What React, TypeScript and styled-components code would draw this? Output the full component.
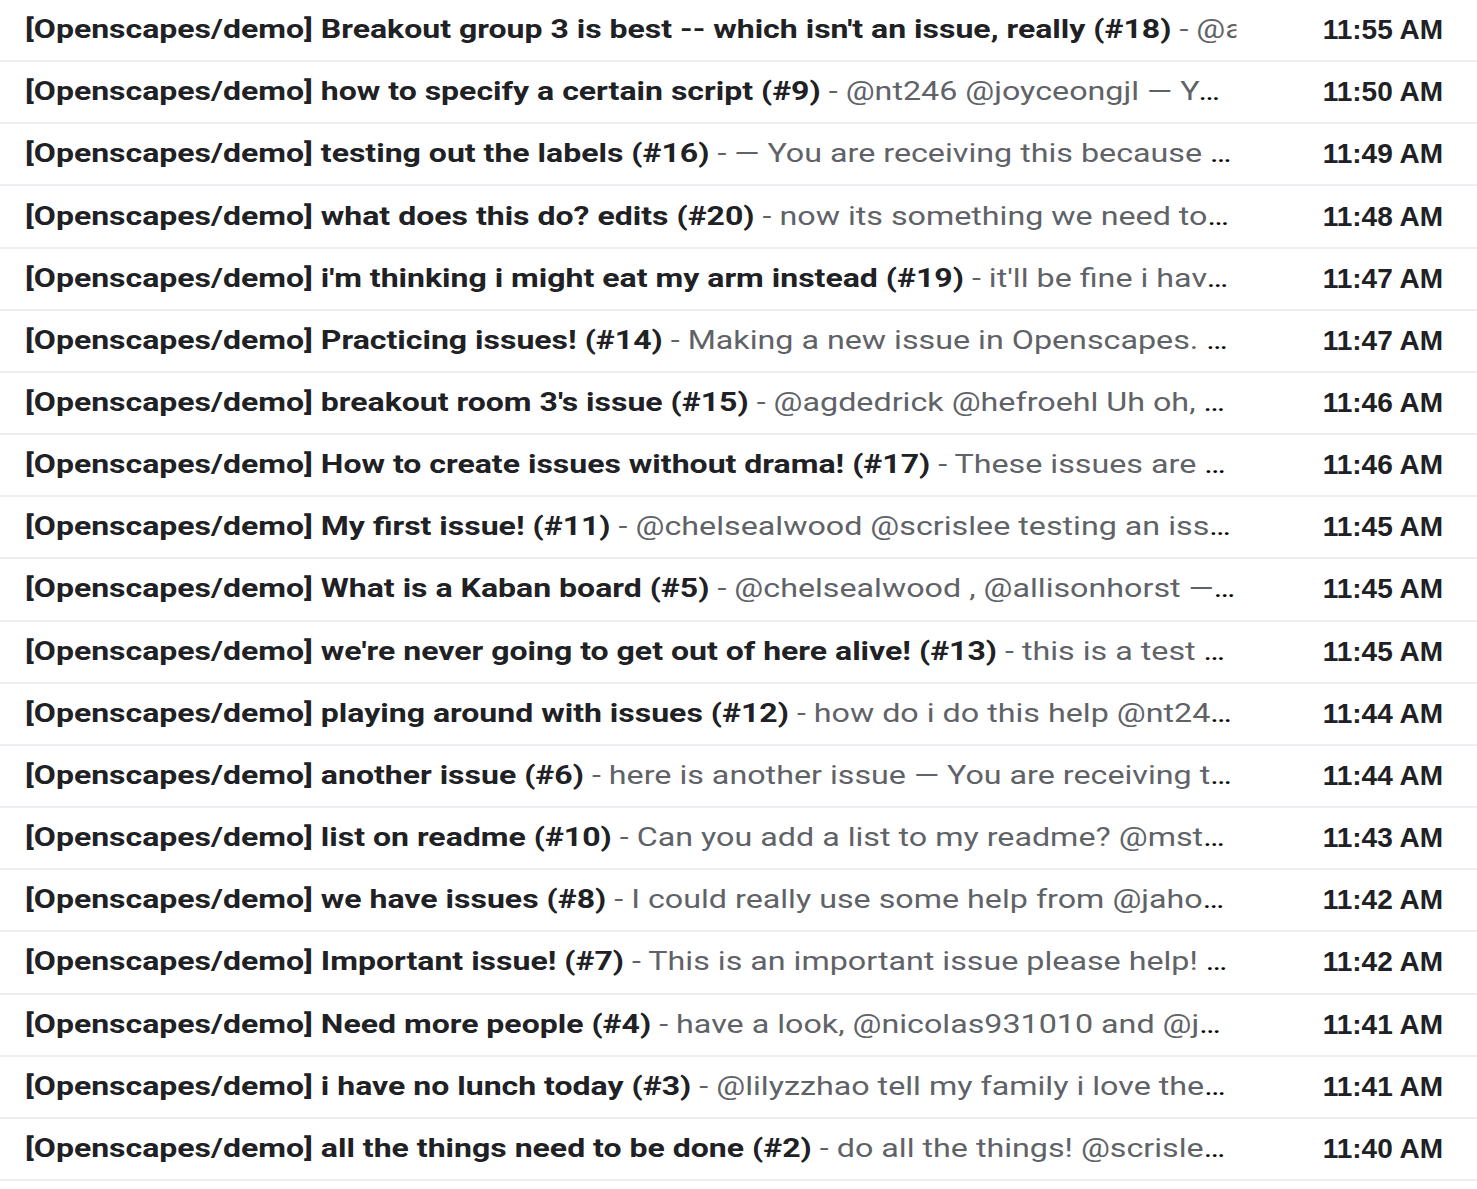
import React from "react";
import styled, { createGlobalStyle } from "styled-components";

// the reference text is stretched horizontally; the subject/snippet line is
// laid out narrow and widened by STRETCH so that ellipsis still works
const STRETCH = 1.28;

const GlobalStyle = createGlobalStyle`
  html, body {
    margin: 0;
    padding: 0;
    background: #ffffff;
    overflow: hidden;
  }
  body {
    font-family: Roboto, "Liberation Sans", Arial, sans-serif;
    -webkit-font-smoothing: antialiased;
  }
`;

const List = styled.div`
  display: flex;
  flex-direction: column;
`;

const Row = styled.div`
  height: 62.17px;
  box-sizing: border-box;
  display: flex;
  align-items: center;
  border-bottom: 2px solid #eceef1;
`;

const Content = styled.div`
  flex: 1;
  min-width: 0;
`;

const Line = styled.div<{ $clip?: boolean }>`
  width: calc(100% / ${STRETCH});
  box-sizing: border-box;
  padding-left: 19.5px;
  transform: scaleX(${STRETCH});
  transform-origin: 0 50%;
  overflow: hidden;
  white-space: nowrap;
  text-overflow: ${(p) => (p.$clip ? "clip" : "ellipsis")};
  font-size: 25px;
  line-height: 32px;
`;

const Subject = styled.span`
  font-weight: 700;
  color: #202124;
`;

const Snippet = styled.span`
  font-size: 25.2px;
  font-weight: 400;
  color: #5f6368;
`;

const Time = styled.div`
  flex: 0 0 241px;
  box-sizing: border-box;
  padding-right: 34px;
  text-align: right;
  font-family: "Liberation Sans", Arial, sans-serif;
  font-size: 28px;
  font-weight: 700;
  color: #202124;
  white-space: nowrap;
`;

type Mail = {
  subject: string;
  snippet: string;
  time: string;
  clip?: boolean;
};

const mails: Mail[] = [
  {
    subject: "Breakout group 3 is best -- which isn't an issue, really (#18)",
    snippet: "@allisonhorst @jules32 — You are receiving this because you were mentioned.",
    time: "11:55 AM",
    clip: true,
  },
  {
    subject: "how to specify a certain script (#9)",
    snippet: "@nt246 @joyceongjl — You are receiving this because you were mentioned.",
    time: "11:50 AM",
  },
  {
    subject: "testing out the labels (#16)",
    snippet: "— You are receiving this because you are subscribed to this thread.",
    time: "11:49 AM",
  },
  {
    subject: "what does this do? edits (#20)",
    snippet: "now its something we need to fix — You are receiving this.",
    time: "11:48 AM",
  },
  {
    subject: "i'm thinking i might eat my arm instead (#19)",
    snippet: "it'll be fine i have another one — You are receiving this.",
    time: "11:47 AM",
  },
  {
    subject: "Practicing issues! (#14)",
    snippet: "Making a new issue in Openscapes. — You are receiving this.",
    time: "11:47 AM",
  },
  {
    subject: "breakout room 3's issue (#15)",
    snippet: "@agdedrick @hefroehl Uh oh, — we have an issue — You are receiving this.",
    time: "11:46 AM",
  },
  {
    subject: "How to create issues without drama! (#17)",
    snippet: "These issues are — You are receiving this.",
    time: "11:46 AM",
  },
  {
    subject: "My first issue! (#11)",
    snippet: "@chelsealwood @scrislee testing an issue — You are receiving this.",
    time: "11:45 AM",
  },
  {
    subject: "What is a Kaban board (#5)",
    snippet: "@chelsealwood , @allisonhorst — You are receiving this.",
    time: "11:45 AM",
  },
  {
    subject: "we're never going to get out of here alive! (#13)",
    snippet: "this is a test — You are receiving this.",
    time: "11:45 AM",
  },
  {
    subject: "playing around with issues (#12)",
    snippet: "how do i do this help @nt246 — You are receiving this.",
    time: "11:44 AM",
  },
  {
    subject: "another issue (#6)",
    snippet: "here is another issue — You are receiving this because you were mentioned.",
    time: "11:44 AM",
  },
  {
    subject: "list on readme (#10)",
    snippet: "Can you add a list to my readme? @mstwo — You are receiving this.",
    time: "11:43 AM",
  },
  {
    subject: "we have issues (#8)",
    snippet: "I could really use some help from @jahoward — You are receiving this.",
    time: "11:42 AM",
  },
  {
    subject: "Important issue! (#7)",
    snippet: "This is an important issue please help! — You are receiving this.",
    time: "11:42 AM",
  },
  {
    subject: "Need more people (#4)",
    snippet: "have a look, @nicolas931010 and @jules32 — You are receiving this.",
    time: "11:41 AM",
  },
  {
    subject: "i have no lunch today (#3)",
    snippet: "@lilyzzhao tell my family i love them — You are receiving this.",
    time: "11:41 AM",
  },
  {
    subject: "all the things need to be done (#2)",
    snippet: "do all the things! @scrislee — You are receiving this.",
    time: "11:40 AM",
  },
];

export default function App() {
  return (
    <>
      <GlobalStyle />
      <List>
        {mails.map((m, i) => (
          <Row key={i}>
            <Content>
              <Line $clip={m.clip}>
                <Subject>[Openscapes/demo] {m.subject}</Subject>
                <Snippet> - {m.snippet}</Snippet>
              </Line>
            </Content>
            <Time>{m.time}</Time>
          </Row>
        ))}
      </List>
    </>
  );
}
